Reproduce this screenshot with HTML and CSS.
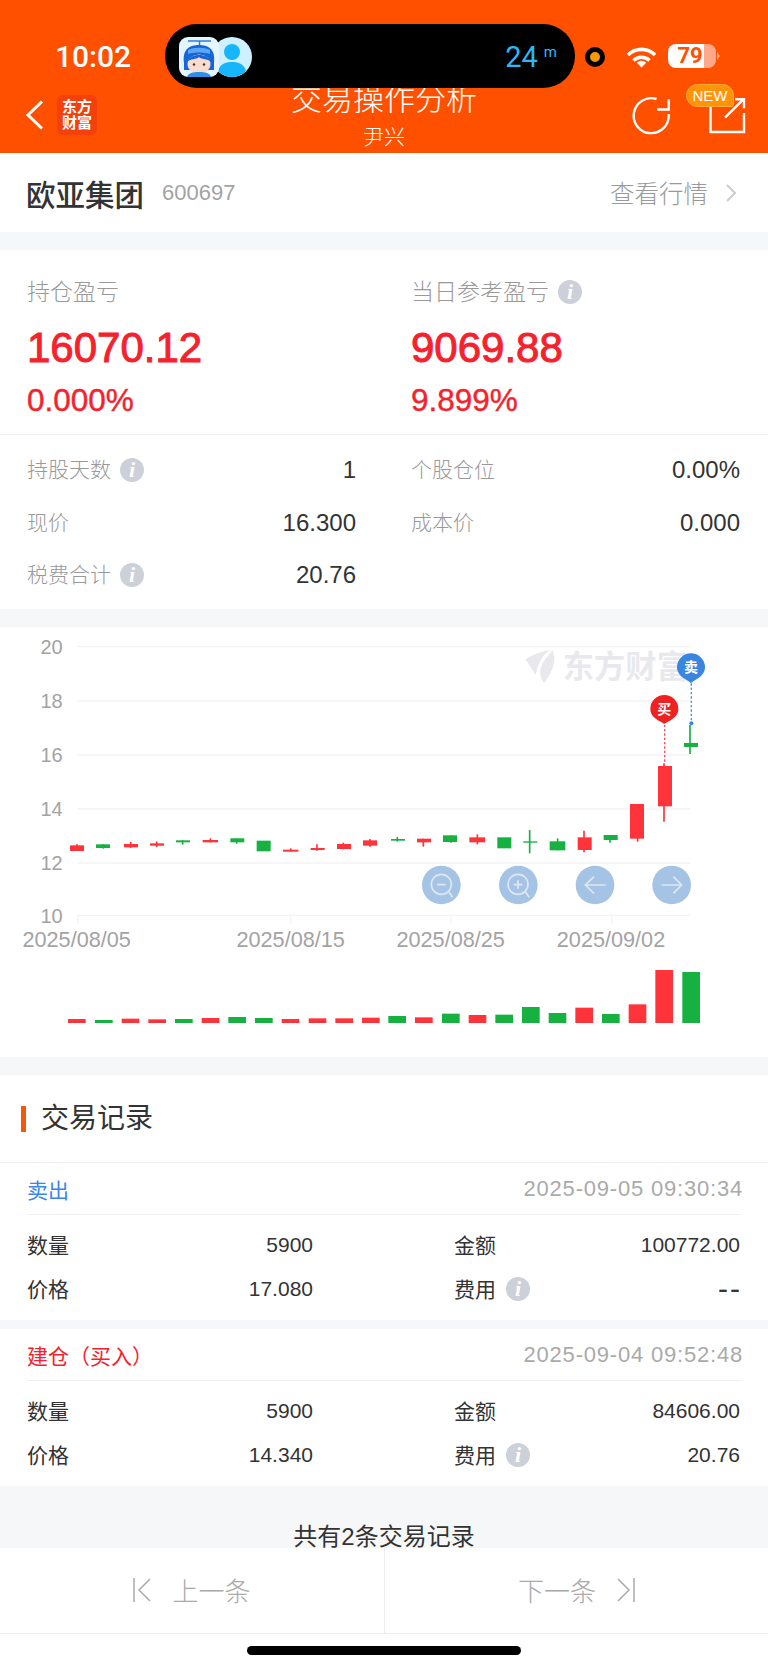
FILE: index.html
```html
<!DOCTYPE html>
<html lang="zh-CN">
  <head>
    <meta charset="UTF-8" />
    <meta name="viewport" content="width=device-width, initial-scale=1.0" />
    <title>交易操作分析</title>
    <link rel="stylesheet" href="styles.css">
  </head>

  <body>
    <div class="page">
      <header class="header">
        <div class="status">
          <div class="time">10:02</div>
          <div class="island">
            <div class="avatar">
              <svg viewBox="0 0 40 40" width="40" height="40">
                <rect width="40" height="40" rx="9" fill="#e4f5fc" />
                <path d="M9 4H32M20.500 4V9" stroke="#2a7de0" stroke-width="1.500" fill="none" />
                <path d="M5 26C3 12 11 8 20 8C29 8 37 12 35 26V33H5Z" fill="#1766d6" />
                <path d="M9 13C15 10 25 10 31 13V17C25 15 15 15 9 17Z" fill="#5aa8f5" />
                <ellipse cx="20" cy="27" rx="11.500" ry="9.500" fill="#f7dccf" />
                <path d="M8 25C10 20 14 18 20 18C26 18 30 20 32 25C28 21 23 23 20 20C17 23 12 21 8 25Z" fill="#1766d6" />
                <circle cx="15" cy="27.500" r="1.200" fill="#4a2c20" />
                <circle cx="25" cy="27.500" r="1.200" fill="#4a2c20" />
                <path d="M8 40C9 36 14 35 20 35C26 35 31 36 32 40Z" fill="#2f8fe8" />
              </svg>
            </div>
            <div class="person">
              <svg viewBox="0 0 40 40" width="40" height="40">
                <circle cx="20" cy="20" r="20" fill="#cff1ff" />
                <circle cx="20" cy="15" r="8" fill="#17b6fa" />
                <path d="M6 34C8 27 13 25 20 25C27 25 32 27 34 34C30 38 25 40 20 40C15 40 10 38 6 34Z" fill="#17b6fa" />
              </svg>
            </div>
            <div class="timer">24<span class="unit">m</span></div>
          </div>
          <div class="rec-dot"></div>
          <svg class="wifi" viewBox="0 0 31 21" width="31" height="21">
            <path d="M2 8A19 19 0 0 1 29 8M7.500 13.500A11.500 11.500 0 0 1 23.500 13.500" fill="none" stroke="#fff" stroke-width="3.600" />
            <path d="M15.500 20.500L10.800 15.800A6.600 6.600 0 0 1 20.200 15.800Z" fill="#fff" />
          </svg>
          <div class="battery">79</div>
        </div>

        <div class="nav">
          <div class="nav-left">
            <svg class="back" viewBox="0 0 20 30" width="20" height="30">
              <path d="M17 1.500L3 15L17 28.500" fill="none" stroke="#fff" stroke-width="3" />
            </svg>
            <div class="brand">东方<br />财富</div>
          </div>
          <div class="nav-title">
            <div class="title">交易操作分析</div>
            <div class="subtitle">尹兴</div>
          </div>
          <div class="nav-right">
            <svg viewBox="0 0 40 40" width="40" height="40">
              <path d="M25.500 3A17.500 17.500 0 1 0 37.600 18M26 13.500H37.700V3.300" fill="none" stroke="#fff" stroke-width="2.400" />
            </svg>
            <div class="share">
              <svg viewBox="0 0 40 40" width="40" height="40">
                <path d="M38 17V36H4.500V8H20M19 21.700L37.300 3.300M29 3.300H38V12.300" fill="none" stroke="#fff" stroke-width="2.400" />
              </svg>
              <span class="badge">NEW</span>
            </div>
          </div>
        </div>
      </header>

      <section class="stock">
        <span class="stock-name">欧亚集团</span>
        <span class="stock-code">600697</span>
        <span class="stock-link">查看行情</span>
        <svg class="chevron" viewBox="0 0 12 20" width="12" height="20">
          <path d="M2 2L10 10L2 18" fill="none" stroke="#ccc" stroke-width="2" />
        </svg>
      </section>

      <section class="summary">
        <div class="profit">
          <div class="profit-col">
            <div class="label">持仓盈亏</div>
            <div class="big">16070.12</div>
            <div class="pct">0.000%</div>
          </div>
          <div class="profit-col">
            <div class="label">当日参考盈亏<i class="info">i</i></div>
            <div class="big">9069.88</div>
            <div class="pct">9.899%</div>
          </div>
        </div>
        <div class="facts">
          <div class="fact"><span class="label">持股天数<i class="info">i</i></span><span>1</span></div>
          <div class="fact"><span class="label">个股仓位</span><span>0.00%</span></div>
          <div class="fact"><span class="label">现价</span><span>16.300</span></div>
          <div class="fact"><span class="label">成本价</span><span>0.000</span></div>
          <div class="fact"><span class="label">税费合计<i class="info">i</i></span><span>20.76</span></div>
        </div>
      </section>

      <section class="chart">
        <!-- viewBox is 3x the page pixels -->
        <svg viewBox="0 21 2304 1290" width="768" height="430">
          <g class="grid">
            <path d="M231 80H2072M231 243H2072M231 405H2072M231 567H2072M231 729H2072M231 886H2072" />
            <path d="M233 886V912M872 886V912M1353 886V912M1835 886V912" />
          </g>

          <g class="watermark">
            <path d="M1576 118Q1612 95 1650 90Q1617 110 1607 165Q1592 140 1576 118Z" />
            <path d="M1657 90Q1677 130 1632 190Q1612 165 1627 130Q1642 110 1657 90Z" />
            <text x="1688" y="174">东方财富</text>
          </g>

          <g class="axis-y">
            <text x="188" y="101">20</text>
            <text x="188" y="264">18</text>
            <text x="188" y="426">16</text>
            <text x="188" y="588">14</text>
            <text x="188" y="750">12</text>
            <text x="188" y="909">10</text>
          </g>
          <g class="axis-x">
            <text x="230" y="982">2025/08/05</text>
            <text x="872" y="982">2025/08/15</text>
            <text x="1352" y="982">2025/08/25</text>
            <text x="1833" y="982">2025/09/02</text>
          </g>

          <g class="candles red">
            <rect x="210" y="676" width="42" height="17" /><path d="M231 673V693" />
            <rect x="372" y="672" width="42" height="10" /><path d="M392 666V684" />
            <rect x="450" y="670" width="42" height="7" /><path d="M470 664V681" />
            <rect x="608" y="660" width="46" height="7" /><path d="M631 655V667" />
            <rect x="849" y="689" width="46" height="6" /><path d="M872 685V695" />
            <rect x="932" y="684" width="42" height="6" /><path d="M951 673V692" />
            <rect x="1011" y="672" width="42" height="15" /><path d="M1030 668V688" />
            <rect x="1089" y="661" width="42" height="16" /><path d="M1110 657V680" />
            <rect x="1251" y="656" width="42" height="11" /><path d="M1270 656V680" />
            <rect x="1408" y="652" width="47" height="15" /><path d="M1432 643V673" />
            <rect x="1733" y="652" width="42" height="38" /><path d="M1752 632V697" />
            <rect x="1890" y="552" width="42" height="104" /><path d="M1913 552V665" />
            <rect x="1974" y="438" width="42" height="121" /><path d="M1992 430V605" />
          </g>
          <g class="candles green">
            <rect x="288" y="673" width="42" height="11" /><path d="M310 673V686" />
            <rect x="528" y="661" width="42" height="6" /><path d="M548 661V674" />
            <rect x="691" y="655" width="42" height="12" /><path d="M710 655V671" />
            <rect x="770" y="662" width="42" height="32" />
            <rect x="1173" y="657" width="42" height="5" /><path d="M1192 651V665" />
            <rect x="1329" y="646" width="42" height="20" /><path d="M1353 646V668" />
            <rect x="1492" y="652" width="42" height="33" />
            <rect x="1570" y="664" width="42" height="4" /><path d="M1589 630V700" />
            <rect x="1649" y="664" width="47" height="27" /><path d="M1673 655V691" />
            <rect x="1811" y="645" width="42" height="15" /><path d="M1830 645V668" />
            <rect x="2052" y="369" width="42" height="12" /><path d="M2070 315V402" />
          </g>

          <path class="guide-buy" d="M1994 314V430" />
          <path class="pin-buy" d="M1993 312C1985 304 1951 296 1951 267A42 42 0 0 1 2035 267C2035 296 2001 304 1993 312Z" />
          <text class="pin-text" x="1993" y="283">买</text>
          <path class="guide-sell" d="M2074 190V310" />
          <circle class="dot-sell" cx="2074" cy="310" r="6" />
          <path class="pin-sell" d="M2073 190C2065 180 2031 171 2031 142A42 42 0 0 1 2115 142C2115 171 2081 180 2073 190Z" />
          <text class="pin-text" x="2073" y="157">卖</text>

          <g class="tools">
            <circle cx="1324" cy="795" r="58" />
            <circle cx="1555" cy="795" r="58" />
            <circle cx="1785" cy="795" r="58" />
            <circle cx="2015" cy="795" r="58" />
          </g>
          <g class="tool-icons">
            <circle cx="1324" cy="793" r="30" />
            <path d="M1346 815L1358 832M1311 794H1337" />
            <circle cx="1554" cy="793" r="30" />
            <path d="M1576 815L1588 832M1541 794H1567M1554 781V807" />
            <path d="M1757 795H1817M1782 770L1756 795L1782 820" />
            <path d="M1985 795H2045M2020 770L2045 795L2020 820" />
          </g>

          <g class="volume red">
            <rect x="204" y="1197" width="53" height="12" />
            <rect x="365" y="1196" width="53" height="13" />
            <rect x="445" y="1198" width="53" height="11" />
            <rect x="605" y="1194" width="53" height="15" />
            <rect x="845" y="1197" width="53" height="12" />
            <rect x="926" y="1195" width="53" height="14" />
            <rect x="1006" y="1195" width="53" height="14" />
            <rect x="1086" y="1193" width="53" height="16" />
            <rect x="1245" y="1192" width="53" height="17" />
            <rect x="1406" y="1185" width="53" height="24" />
            <rect x="1726" y="1163" width="53" height="46" />
            <rect x="1886" y="1153" width="53" height="56" />
            <rect x="1966" y="1050" width="53" height="159" />
          </g>
          <g class="volume green">
            <rect x="285" y="1200" width="53" height="9" />
            <rect x="525" y="1197" width="53" height="12" />
            <rect x="685" y="1191" width="53" height="18" />
            <rect x="765" y="1194" width="53" height="15" />
            <rect x="1165" y="1188" width="53" height="21" />
            <rect x="1326" y="1181" width="53" height="28" />
            <rect x="1486" y="1184" width="53" height="25" />
            <rect x="1566" y="1161" width="53" height="48" />
            <rect x="1646" y="1179" width="53" height="30" />
            <rect x="1806" y="1182" width="53" height="27" />
            <rect x="2047" y="1056" width="53" height="153" />
          </g>
        </svg>
      </section>

      <section class="records">
        <h2 class="records-title">交易记录</h2>

        <div class="record">
          <div class="record-head">
            <span class="side sell">卖出</span>
            <span class="record-time">2025-09-05 09:30:34</span>
          </div>
          <div class="record-body">
            <div class="cell"><span>数量</span><span>5900</span></div>
            <div class="cell"><span>金额</span><span>100772.00</span></div>
            <div class="cell"><span>价格</span><span>17.080</span></div>
            <div class="cell"><span>费用<i class="info">i</i></span><span class="none">--</span></div>
          </div>
        </div>

        <div class="record">
          <div class="record-head">
            <span class="side buy">建仓（买入）</span>
            <span class="record-time">2025-09-04 09:52:48</span>
          </div>
          <div class="record-body">
            <div class="cell"><span>数量</span><span>5900</span></div>
            <div class="cell"><span>金额</span><span>84606.00</span></div>
            <div class="cell"><span>价格</span><span>14.340</span></div>
            <div class="cell"><span>费用<i class="info">i</i></span><span>20.76</span></div>
          </div>
        </div>
      </section>

      <div class="total">共有2条交易记录</div>

      <footer class="pager">
        <div class="pager-btn">
          <svg viewBox="0 0 18 26" width="18" height="26">
            <path d="M1 1V25M17 2L6 13L17 24" fill="none" stroke="#aaa" stroke-width="1.500" />
          </svg>
          <span>上一条</span>
        </div>
        <div class="pager-btn">
          <span>下一条</span>
          <svg viewBox="0 0 18 26" width="18" height="26">
            <path d="M17 1V25M1 2L12 13L1 24" fill="none" stroke="#aaa" stroke-width="1.500" />
          </svg>
        </div>
      </footer>

      <div class="home-area"><div class="home-bar"></div></div>
    </div>
  </body>
</html>
```

FILE: styles.css
```css
* {
  margin: 0;
  padding: 0;
  box-sizing: border-box;
}

body {
  background-color: #f6f7f8;
  font-family: "Liberation Sans", "Noto Sans CJK SC", sans-serif;
  color: #333;
}

.page {
  width: 768px;
  height: 1669px;
  overflow: hidden;
}

/* header */

.header {
  height: 153px;
  background-color: #ff5000;
  color: #fff;
}

.status {
  position: relative;
  z-index: 1;
  height: 88px;
  padding: 24px 0 0 55px;
  display: flex;
  align-items: flex-start;
}

.time {
  width: 76px;
  margin-top: 18px;
  font-family: Roboto, sans-serif;
  font-size: 30px;
  line-height: 30px;
  font-weight: 500;
  white-space: nowrap;
}

.island {
  width: 410px;
  height: 64px;
  margin-left: 34px;
  padding: 13px 18px 0 14px;
  border-radius: 32px;
  background-color: #000;
  display: flex;
}

.avatar {
  position: relative;
  z-index: 1;
  height: 40px;
}

.person {
  margin-left: -7px;
  height: 40px;
}

.timer {
  margin-left: auto;
  display: flex;
  align-items: flex-start;
  gap: 6px;
  color: #2bb8f5;
  font-size: 29px;
  line-height: 40px;
  font-family: Roboto, sans-serif;
}

.unit {
  font-size: 15px;
  line-height: 30px;
}

.rec-dot {
  width: 20px;
  height: 20px;
  margin: 23px 0 0 10px;
  border: 5px solid #000;
  border-radius: 50%;
  background-color: #f59a0a;
}

.wifi {
  margin: 23px 0 0 21px;
}

.battery {
  position: relative;
  width: 48px;
  height: 24px;
  margin: 20px 0 0 11px;
  padding-right: 4px;
  border-radius: 8px;
  background: linear-gradient(90deg, #fff 75%, #ffa98a 75%);
  color: #ff5000;
  font-family: Roboto, sans-serif;
  font-size: 22px;
  line-height: 24px;
  font-weight: 700;
  text-align: center;
}

.battery::after {
  content: "";
  position: absolute;
  left: 49px;
  top: 8px;
  border-left: 3px solid #ffa98a;
  border-top: 4px solid transparent;
  border-bottom: 4px solid transparent;
}

.nav {
  height: 73px;
  margin-top: -8px;
  padding-top: 5px;
  display: grid;
  grid-template-columns: 1fr auto 1fr;
}

.nav-left {
  height: 40px;
  margin-top: 10px;
  padding-left: 25px;
  display: flex;
  align-items: center;
  gap: 12px;
}

.brand {
  width: 40px;
  height: 40px;
  padding-top: 4px;
  border-radius: 6px;
  background-color: #f4400a;
  font-size: 15px;
  line-height: 16px;
  font-weight: 700;
  text-align: center;
}

.nav-title {
  text-align: center;
}

.title {
  font-size: 31px;
  line-height: 30px;
  font-weight: 300;
}

.subtitle {
  margin-top: 10px;
  font-size: 21px;
  line-height: 24px;
  font-weight: 300;
}

.nav-right {
  height: 40px;
  margin-top: 11px;
  padding-right: 22px;
  display: flex;
  justify-content: flex-end;
  gap: 35px;
}

.share {
  position: relative;
  height: 40px;
}

.badge {
  position: absolute;
  left: -20px;
  top: -12px;
  width: 48px;
  height: 23px;
  border: 1px solid #ffab3a;
  border-radius: 12px 12px 3px 12px;
  background-color: #ff9408;
  font-size: 15px;
  line-height: 21px;
  text-align: center;
}

/* stock row */

.stock {
  height: 79px;
  padding: 0 31px 0 26px;
  display: flex;
  align-items: center;
  background-color: #fff;
}

.stock-name {
  font-size: 29.5px;
  font-weight: 500;
}

.stock-code {
  margin-left: 18px;
  font-size: 22px;
  color: #a3a3a3;
}

.stock-link {
  margin-left: auto;
  font-size: 24.5px;
  font-weight: 300;
  color: #999;
}

.chevron {
  margin-left: 17px;
}

/* summary */

.summary {
  height: 359px;
  margin-top: 18px;
  background-color: #fff;
}

.profit {
  height: 185px;
  padding: 27px 28px 0 27px;
  border-bottom: 1px solid #f0f0f0;
  display: grid;
  grid-template-columns: 329px 329px;
  column-gap: 55px;
}

.label {
  color: #999;
  font-size: 23px;
  line-height: 30px;
  font-weight: 300;
  display: flex;
  align-items: center;
}

.info {
  width: 24px;
  height: 24px;
  margin-left: 9px;
  flex-shrink: 0;
  border-radius: 50%;
  background-color: #ccd0d8;
  color: #fff;
  font-family: "Liberation Serif", serif;
  font-size: 22px;
  line-height: 24px;
  font-weight: 700;
  font-style: italic;
  text-align: center;
}

.big {
  margin-top: 16px;
  color: #f5222d;
  font-size: 42px;
  line-height: 50px;
  -webkit-text-stroke: 1px #f5222d;
}

.pct {
  margin-top: 9px;
  color: #f5222d;
  font-size: 31.5px;
  line-height: 36px;
  -webkit-text-stroke: 0.4px #f5222d;
}

.facts {
  padding: 9px 28px 0 27px;
  display: grid;
  grid-template-columns: 329px 329px;
  grid-auto-rows: 52.5px;
  column-gap: 55px;
}

.fact {
  display: flex;
  justify-content: space-between;
  align-items: center;
  font-size: 24px;
}

.fact .label {
  font-size: 21px;
}

/* chart */

.chart {
  height: 430px;
  margin-top: 18px;
  background-color: #fff;
}

.chart svg {
  display: block;
}

.grid path {
  fill: none;
  stroke: #f3f3f3;
  stroke-width: 4;
}

.watermark {
  fill: #e9e9ed;
  font-size: 94px;
  font-weight: 700;
}

.axis-y text,
.axis-x text {
  fill: #a3a3a3;
  font-size: 60px;
}

.axis-y text {
  text-anchor: end;
}

.axis-x text {
  font-size: 65px;
  text-anchor: middle;
}

.candles path {
  stroke-width: 5;
  fill: none;
}

.red {
  fill: #ff343b;
  stroke: #ff343b;
}

.green {
  fill: #16b141;
  stroke: #16b141;
}

.candles rect,
.volume rect {
  stroke: none;
}

.guide-buy,
.guide-sell {
  fill: none;
  stroke-width: 4;
  stroke-dasharray: 7 6;
}

.guide-buy {
  stroke: #f5505a;
}

.guide-sell {
  stroke: #4a90e8;
}

.dot-sell {
  fill: #3a85e0;
}

.pin-buy {
  fill: #ee2222;
}

.pin-sell {
  fill: #3a85e0;
}

.pin-text {
  fill: #fff;
  font-size: 42px;
  font-weight: 700;
  text-anchor: middle;
}

.tools circle {
  fill: #a5c3e4;
}

.tool-icons circle,
.tool-icons path {
  fill: none;
  stroke: #dde8f4;
  stroke-width: 5;
}

/* records */

.records {
  margin-top: 18px;
}

.records-title {
  height: 88px;
  padding-left: 41px;
  position: relative;
  border-bottom: 1px solid #f0f0f0;
  background-color: #fff;
  font-size: 28px;
  line-height: 87px;
  font-weight: 400;
}

.records-title::before {
  content: "";
  position: absolute;
  left: 21px;
  top: 31px;
  width: 5px;
  height: 26px;
  background-color: #f05a0a;
}

.record {
  padding: 0 26px 0 27px;
  background-color: #fff;
}

.record + .record {
  margin-top: 9px;
}

.record-head {
  height: 52px;
  border-bottom: 1px solid #f0f0f0;
  display: flex;
  justify-content: space-between;
  align-items: center;
  font-size: 21px;
}

.sell {
  color: #3a85e8;
}

.buy {
  color: #f5222d;
}

.record-time {
  color: #aaa;
  font-size: 22px;
  letter-spacing: 0.8px;
  margin-right: -1px;
}

.record-body {
  padding: 8px 0 9px;
  display: grid;
  grid-template-columns: 286px 286px;
  grid-auto-rows: 44px;
  column-gap: 141px;
}

.cell {
  display: flex;
  justify-content: space-between;
  align-items: center;
  font-size: 21px;
}

.cell span:first-child {
  padding-bottom: 2px;
  display: flex;
  align-items: center;
}

.cell .info {
  margin-left: 10px;
  margin-top: 2px;
}

.none {
  margin-right: -2px;
  font-size: 30px;
  line-height: 24px;
  letter-spacing: 2px;
}

/* bottom */

.total {
  height: 62px;
  padding-top: 39px;
  overflow: hidden;
  font-size: 24px;
  line-height: 24px;
  text-align: center;
}

.pager {
  height: 86px;
  border-bottom: 1px solid #eee;
  background-color: #fff;
  display: grid;
  grid-template-columns: 384px 384px;
}

.pager-btn {
  padding-bottom: 2px;
  display: flex;
  justify-content: center;
  align-items: center;
  gap: 21px;
  color: #aaa;
  font-size: 26px;
  font-weight: 300;
}

.pager-btn + .pager-btn {
  border-left: 1px solid #eee;
}

.home-area {
  height: 35px;
  padding-top: 12px;
  background-color: #fff;
}

.home-bar {
  width: 274px;
  height: 9px;
  margin: 0 auto;
  border-radius: 5px;
  background-color: #000;
}
```
